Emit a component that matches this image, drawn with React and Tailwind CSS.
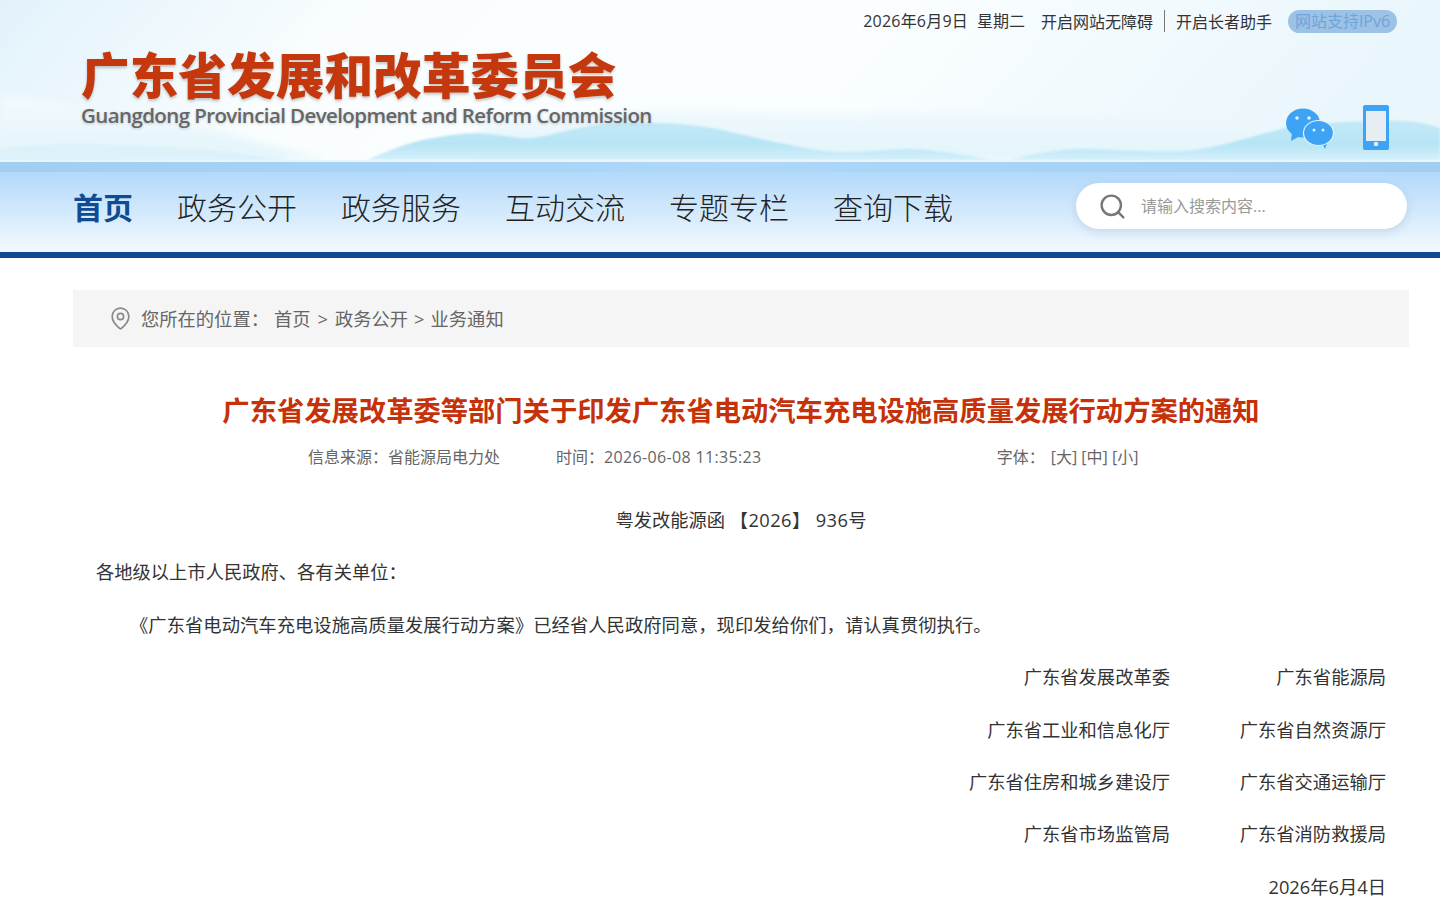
import { MapPin, Search } from "lucide-react"

const font = "[font-family:'Open_Sans','Noto_Sans_CJK_SC',sans-serif]"

const navItems = ["政务公开", "政务服务", "互动交流", "专题专栏", "查询下载"]

const signers = [
  ["广东省发展改革委", "广东省能源局"],
  ["广东省工业和信息化厅", "广东省自然资源厅"],
  ["广东省住房和城乡建设厅", "广东省交通运输厅"],
  ["广东省市场监管局", "广东省消防救援局"],
]

function BannerArt() {
  return (
    <svg className="absolute inset-0 h-full w-full" viewBox="0 0 1440 160" preserveAspectRatio="none">
      <defs>
        <linearGradient id="sky" x1="0" y1="0" x2="1" y2="0.1">
          <stop offset="0" stopColor="#e2f2fb" />
          <stop offset="0.25" stopColor="#f9fdfe" />
          <stop offset="0.6" stopColor="#fbfeff" />
          <stop offset="1" stopColor="#e9f6fc" />
        </linearGradient>
        <linearGradient id="hill" gradientUnits="userSpaceOnUse" x1="0" y1="120" x2="0" y2="160">
          <stop offset="0" stopColor="#c4e9f7" />
          <stop offset="0.6" stopColor="#b7e4f6" />
          <stop offset="1" stopColor="#d4f0fa" />
        </linearGradient>
        <linearGradient id="far" gradientUnits="userSpaceOnUse" x1="0" y1="95" x2="0" y2="150">
          <stop offset="0" stopColor="#f4fbfe" />
          <stop offset="1" stopColor="#e4f5fb" />
        </linearGradient>
        <filter id="soft">
          <feGaussianBlur stdDeviation="0.8" />
        </filter>
        <filter id="softer">
          <feGaussianBlur stdDeviation="4" />
        </filter>
      </defs>
      <rect width="1440" height="160" fill="url(#sky)" />
      <path d="M0 95 C60 100 120 118 190 125 C240 135 280 150 330 160 L0 160Z" fill="url(#far)" filter="url(#softer)" />
      <path d="M480 125 C580 112 680 105 760 112 C860 118 960 108 1100 116 C1180 118 1240 122 1300 125 L1300 160 L480 160Z" fill="url(#far)" filter="url(#softer)" />
      <path d="M0 148 C30 146 50 144 73 144 C110 144 150 146 184 148 C220 150 250 155 290 160 L0 160Z" fill="#dcf1fa" filter="url(#soft)" />
      <path d="M367 160 C385 152 405 144 422 140 C445 136 460 133 477 133 C500 134 515 139 533 138 C555 135 575 127 597 125 C630 122 670 122 698 126 C730 130 760 140 790 145 C810 149 825 152 845 152 C870 152 890 149 909 149 C940 150 970 156 996 160Z" fill="url(#hill)" filter="url(#soft)" />
      <path d="M1010 160 C1030 154 1060 149 1084 149 C1120 150 1155 152 1185 151 C1220 148 1255 135 1285 128 C1320 122 1370 120 1405 121 C1420 122 1430 125 1440 128 L1440 160Z" fill="url(#hill)" filter="url(#soft)" />
    </svg>
  )
}

function WechatIcon() {
  return (
    <svg width="50" height="42" viewBox="0 0 50 42">
      <ellipse cx="19" cy="16" rx="17" ry="14.5" fill="#3fa3f5" />
      <path d="M8 26 L7 34 L16 29Z" fill="#3fa3f5" />
      <path d="M38 36 L41 42 L44 34Z" fill="#3fa3f5" />
      <ellipse cx="34.5" cy="26" rx="15" ry="12.5" fill="#3fa3f5" stroke="#e4f4fb" strokeWidth="1.2" />
      <circle cx="13" cy="11" r="1.8" fill="#dff1fc" />
      <circle cx="25" cy="11" r="1.8" fill="#dff1fc" />
      <circle cx="30" cy="23" r="1.5" fill="#dff1fc" />
      <circle cx="39" cy="23" r="1.5" fill="#dff1fc" />
    </svg>
  )
}

function PhoneIcon() {
  return (
    <svg width="26" height="45" viewBox="0 0 26 45">
      <rect width="26" height="45" rx="2" fill="#3fa3f5" />
      <rect x="3" y="6" width="20" height="30" fill="#e6eef3" />
      <rect x="11" y="37" width="4" height="4" rx="1" fill="#dff1fc" />
    </svg>
  )
}

export default function App() {
  return (
    <div className={`h-[912px] w-[1440px] overflow-hidden bg-white text-[#333] ${font}`}>
      <header className="relative h-[160px]">
        <BannerArt />
        <div className="relative flex h-[42px] items-center justify-end pr-[43px] text-base text-[#333]">
          <span className="tracking-[0.2px]">2026年6月9日</span>
          <span className="ml-[9px]">星期二</span>
          <span className="ml-4 mt-0.5">开启网站无障碍</span>
          <span className="mx-[11px] h-[22px] w-px bg-[#777]" />
          <span className="mt-0.5">开启长者助手</span>
          <span className="ml-4 flex h-[23px] w-[109px] items-center justify-center rounded-full bg-[#9cc2e6] text-[#72a3da]">
            网站支持IPv6
          </span>
        </div>
        <div className="relative flex items-start justify-between pl-[81px] pr-[51px]">
          <div className="pt-[6px]">
            <div className="whitespace-nowrap text-[48.7px] font-black leading-[50px] text-[#c5380e] [font-family:'Noto_Sans_CJK_SC',sans-serif] [text-shadow:0_2px_3px_rgba(0,0,0,0.22)]">
              广东省发展和改革委员会
            </div>
            <div className="mt-1 whitespace-nowrap text-[20.5px] font-semibold leading-[26px] tracking-[-0.6px] text-[#666] [text-shadow:0_1px_3px_rgba(0,0,0,0.2)]">
              Guangdong Provincial Development and Reform Commission
            </div>
          </div>
          <div className="mt-[63px] flex items-start gap-[29px]">
            <div className="mt-[2px]">
              <WechatIcon />
            </div>
            <PhoneIcon />
          </div>
        </div>
      </header>
      <div className="h-0.5 bg-[#e8f5fb]" />

      <div className="h-2.5 bg-gradient-to-r from-[#a0cef3] via-[#aed7f9] to-[#a0cef3]" />
      <nav className="flex h-[80px] items-center justify-between bg-gradient-to-b from-[#b2d9fa] to-[#f3f9fe] pl-[73px] pr-[33px]">
        <div className="-mt-2 flex items-center gap-[44px] text-[30px] font-light leading-none text-[#222]">
          <span className="font-bold text-[#0f4a92]">首页</span>
          {navItems.map((item) => (
            <span key={item}>{item}</span>
          ))}
        </div>
        <div className="-mt-3 flex h-[46px] w-[331px] items-center rounded-full bg-white pl-[22px] shadow-[0_3px_10px_rgba(80,120,160,0.2)]">
          <Search className="size-[29px] text-[#777]" strokeWidth={2} />
          <span className="ml-[14px] text-base text-[#999]">请输入搜索内容...</span>
        </div>
      </nav>
      <div className="h-1.5 bg-[#0f4a92]" />

      <main className="ml-[73px] w-[1336px] pt-8">
        <div className="flex h-[57px] items-center bg-[#f5f5f5] pl-[35px] text-[18.3px] text-[#666]">
          <MapPin className="size-[25px] text-[#888]" strokeWidth={1.6} />
          <span className="ml-[8px]">您所在的位置：</span>
          <span className="ml-[5px]">首页</span>
          <span className="mx-[7px]">&gt;</span>
          <span>政务公开</span>
          <span className="mx-[6px]">&gt;</span>
          <span>业务通知</span>
        </div>

        <h1 className="mt-[42px] whitespace-nowrap text-center text-[27.3px] font-bold leading-10 text-[#c5320a] [font-family:'Noto_Sans_CJK_SC',sans-serif]">
          广东省发展改革委等部门关于印发广东省电动汽车充电设施高质量发展行动方案的通知
        </h1>

        <div className="mt-4 flex h-6 items-center text-base text-[#666]">
          <span className="ml-[235px]">信息来源：省能源局电力处</span>
          <span className="ml-[56px]">
            时间：<span className="tracking-[0.35px]">2026-06-08 11:35:23</span>
          </span>
          <span className="ml-[235px]">字体：</span>
          <span className="ml-[6px]">[大] [中] [小]</span>
        </div>

        <div className="mt-[25px] px-[23px] text-[18.3px] leading-[52.4px] text-[#333]">
          <p className="text-center">
            粤发改能源函 <span className="tracking-[0.4px]">【2026】 936</span>号
          </p>
          <p>各地级以上市人民政府、各有关单位：</p>
          <p className="indent-[34px] tracking-[0.05px]">
            《广东省电动汽车充电设施高质量发展行动方案》已经省人民政府同意，现印发给你们，请认真贯彻执行。
          </p>
          {signers.map(([left, right]) => (
            <div key={left} className="flex justify-end">
              <span>{left}</span>
              <span className="w-[216px] text-right">{right}</span>
            </div>
          ))}
          <p className="text-right">2026年6月4日</p>
        </div>
      </main>
    </div>
  )
}
